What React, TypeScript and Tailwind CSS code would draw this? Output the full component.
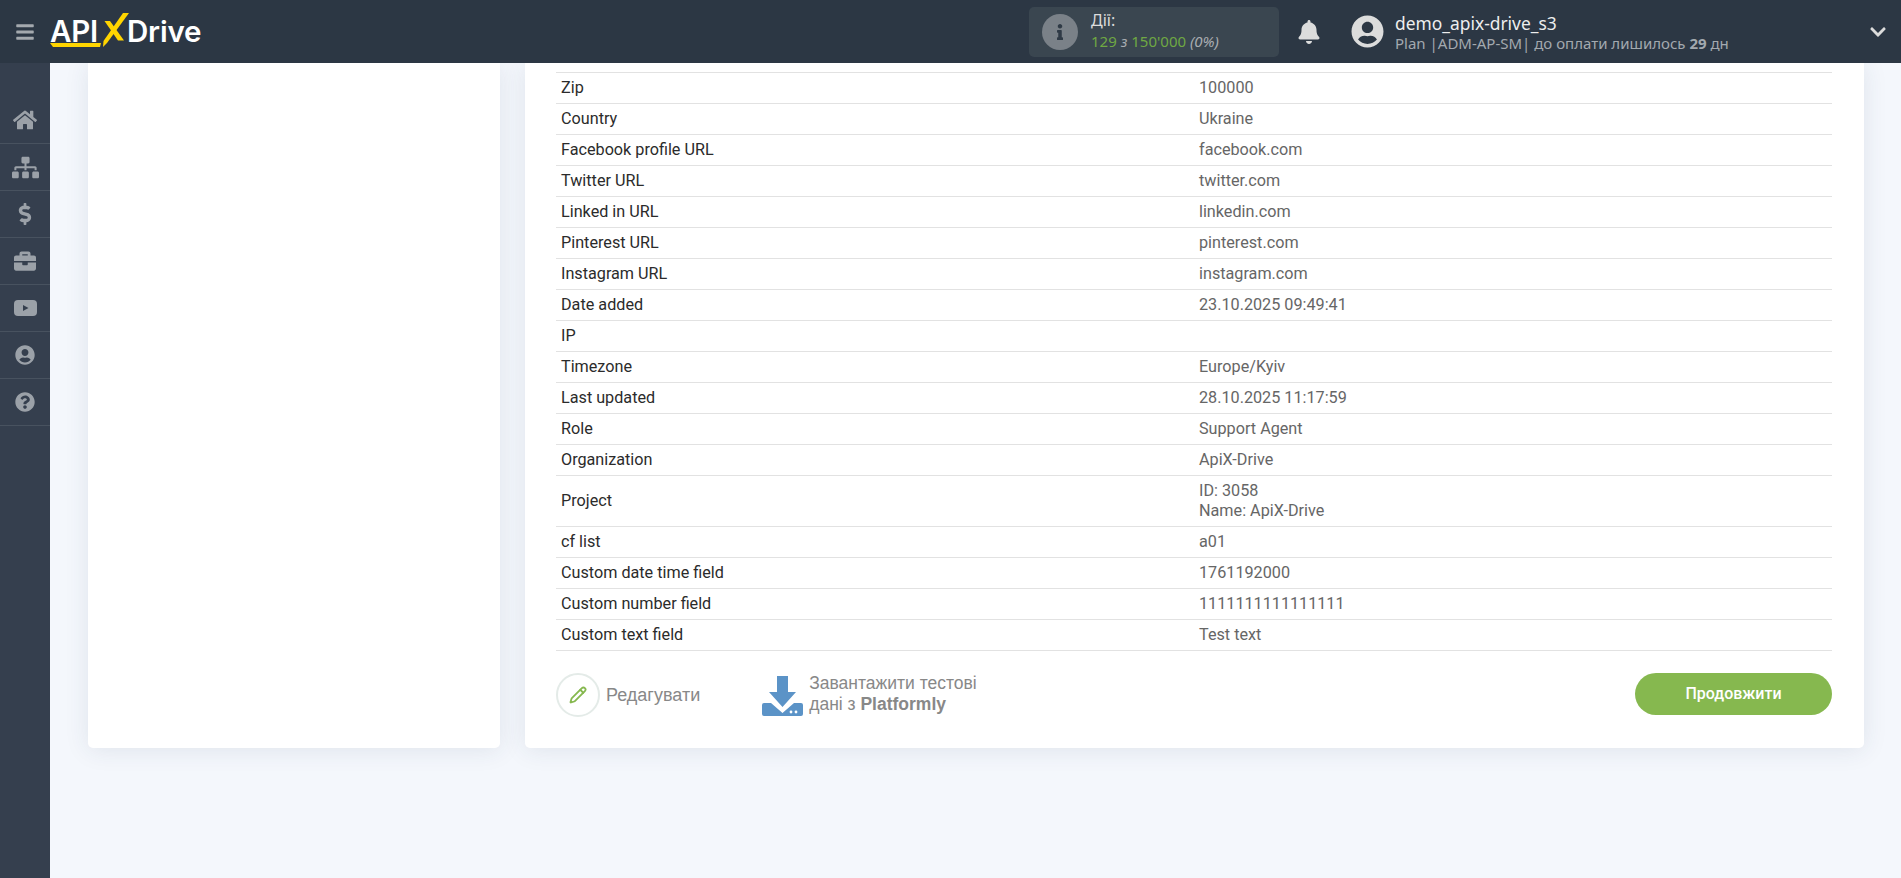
import { FaBars, FaBell, FaBriefcase, FaChevronDown, FaDollarSign, FaHome, FaInfo, FaQuestionCircle, FaSitemap, FaUserCircle } from "react-icons/fa";
import { Pencil } from "lucide-react";

const rows: [string, string[]][] = [
  ["Zip", ["100000"]],
  ["Country", ["Ukraine"]],
  ["Facebook profile URL", ["facebook.com"]],
  ["Twitter URL", ["twitter.com"]],
  ["Linked in URL", ["linkedin.com"]],
  ["Pinterest URL", ["pinterest.com"]],
  ["Instagram URL", ["instagram.com"]],
  ["Date added", ["23.10.2025 09:49:41"]],
  ["IP", [""]],
  ["Timezone", ["Europe/Kyiv"]],
  ["Last updated", ["28.10.2025 11:17:59"]],
  ["Role", ["Support Agent"]],
  ["Organization", ["ApiX-Drive"]],
  ["Project", ["ID: 3058", "Name: ApiX-Drive"]],
  ["cf list", ["a01"]],
  ["Custom date time field", ["1761192000"]],
  ["Custom number field", ["1111111111111111"]],
  ["Custom text field", ["Test text"]],
];

function Video() {
  return (
    <svg width="23" height="16" viewBox="0 0 23 16">
      <rect width="23" height="16" rx="4" fill="#9ba1a8" />
      <path d="M9 5 L14.5 8 L9 11 Z" fill="#353f4e" />
    </svg>
  );
}

const side = [
  <FaHome size={24} />,
  <FaSitemap size={27} />,
  <FaDollarSign size={22} />,
  <FaBriefcase size={22} />,
  <Video />,
  <FaUserCircle size={20} />,
  <FaQuestionCircle size={20} />,
];

function Logo() {
  return (
    <div className="relative flex items-center h-[40px] w-[155px] text-white text-[29.5px] font-semibold font-['Inter',sans-serif] leading-none tracking-[-0.2px]">
      <span className="w-[57px]">API</span>
      <span className="ml-[20px]">Drive</span>
      <svg className="absolute left-0 top-0" width="100" height="40" viewBox="0 0 100 40" fill="#ffd500">
        <path d="M73 1 L79 1 L57 31 L53 35 L53.5 29 Z" />
        <path d="M54.5 9 L60 9 L74 28.5 L68 28.5 Z" />
        <path d="M0 31 L51 31 L50 35 L3 35 Z" />
      </svg>
    </div>
  );
}

function DownloadIcon() {
  return (
    <svg width="41" height="40" viewBox="0 0 41 40" fill="#5b93c7">
      <path d="M15 0 H26 V16 H34 L20.5 31 L7 16 H15 Z" />
      <path d="M2 27 H9 L20.5 37 L32 27 H39 A2 2 0 0 1 41 29 V38 A2 2 0 0 1 39 40 H2 A2 2 0 0 1 0 38 V29 A2 2 0 0 1 2 27 Z" />
      <circle cx="29" cy="36" r="1.4" fill="#fff" />
      <circle cx="34" cy="36" r="1.4" fill="#fff" />
    </svg>
  );
}

export default function App() {
  return (
    <div className="h-[878px] overflow-hidden bg-[#f4f7fc] font-['Roboto',sans-serif] flex flex-col">
      <header className="relative z-10 h-[63px] shrink-0 bg-[#2c3744] flex items-center">
        <div className="w-[50px] flex justify-center text-[#a4a9ae]"><FaBars size={20} /></div>
        <Logo />
        <div className="ml-[824px] w-[250px] h-[50px] rounded-[5px] bg-[#3a4650] flex items-center">
          <div className="ml-[13px] w-[36px] h-[36px] rounded-full bg-[#7a8188] flex items-center justify-center text-[#2f3a46]"><FaInfo size={16} /></div>
          <div className="ml-[13px] -mt-[2px] font-['Noto_Sans',sans-serif] text-[15px] leading-[20px]">
            <div className="text-[16px] leading-[22px] -mt-[2px] text-[#dcdcdc]">Дії:</div>
            <div className="text-[#6fa843]">129 <i className="text-[#a9adb1]">з</i> 150'000 <i className="text-[#a9adb1]">(0%)</i></div>
          </div>
        </div>
        <div className="ml-[18px] text-[#dcdcdc]"><FaBell size={24} /></div>
        <div className="ml-[30px] text-[#dcdcdc]"><FaUserCircle size={33} /></div>
        <div className="ml-[11px] pt-[2px] font-['Noto_Sans',sans-serif]">
          <div className="text-[17.4px] leading-[22px] text-[#eeeeee]">demo_apix-drive_s3</div>
          <div className="text-[15px] leading-[19px] text-[#a3a9af]">Plan |ADM-AP-SM| до оплати лишилось <b>29</b> дн</div>
        </div>
        <div className="ml-auto mr-[14px] text-[#dcdcdc]"><FaChevronDown size={18} /></div>
      </header>
      <div className="flex flex-1 min-h-0">
        <aside className="relative z-10 w-[50px] shrink-0 bg-[#353f4e] pt-[34px]">
          {side.map((icon, i) => (
            <div key={i} className="h-[47px] box-border border-b border-[#48525f] flex items-center justify-center text-[#9ba1a8]">{icon}</div>
          ))}
        </aside>
        <main className="flex-1 min-w-0 flex items-start gap-[25px] pl-[38px] pr-[37px]">
          <div className="w-[412px] h-[685px] shrink-0 bg-white rounded-b-[5px] shadow-[0_2px_25px_rgba(40,60,90,0.1)]" />
          <section className="flex-1 h-[685px] bg-white rounded-b-[5px] shadow-[0_2px_25px_rgba(40,60,90,0.1)] pl-[31px] pr-[32px] pt-[9px]">
            <div className="border-t border-[#e2e2e2] text-[16.2px] leading-[20px]">
              {rows.map(([k, v]) => (
                <div key={k} className="grid grid-cols-2 items-center border-b border-[#e2e2e2] py-[5px]">
                  <div className="px-[5px] text-[#2b2b2b]">{k}</div>
                  <div className="px-[5px] text-[#666666] min-h-[20px]">{v.map((l) => <div key={l}>{l}</div>)}</div>
                </div>
              ))}
            </div>
            <div className="flex items-start mt-[22px] font-['Liberation_Sans',sans-serif] text-[#888888]">
              <div className="w-[44px] h-[44px] rounded-full border-2 border-[#e4ebe8] flex items-center justify-center text-[#86b84f]"><Pencil size={18} strokeWidth={2.4} /></div>
              <span className="ml-[6px] text-[18px] leading-[44px]">Редагувати</span>
              <div className="ml-[62px] mt-[3px]"><DownloadIcon /></div>
              <div className="ml-[6px] text-[17.5px] leading-[21px]">Завантажити тестові<br />дані з <b>Platformly</b></div>
              <button className="ml-auto w-[197px] h-[42px] rounded-full bg-[#86b84f] text-white font-['Roboto',sans-serif] font-medium text-[16px]">Продовжити</button>
            </div>
          </section>
        </main>
      </div>
    </div>
  );
}
